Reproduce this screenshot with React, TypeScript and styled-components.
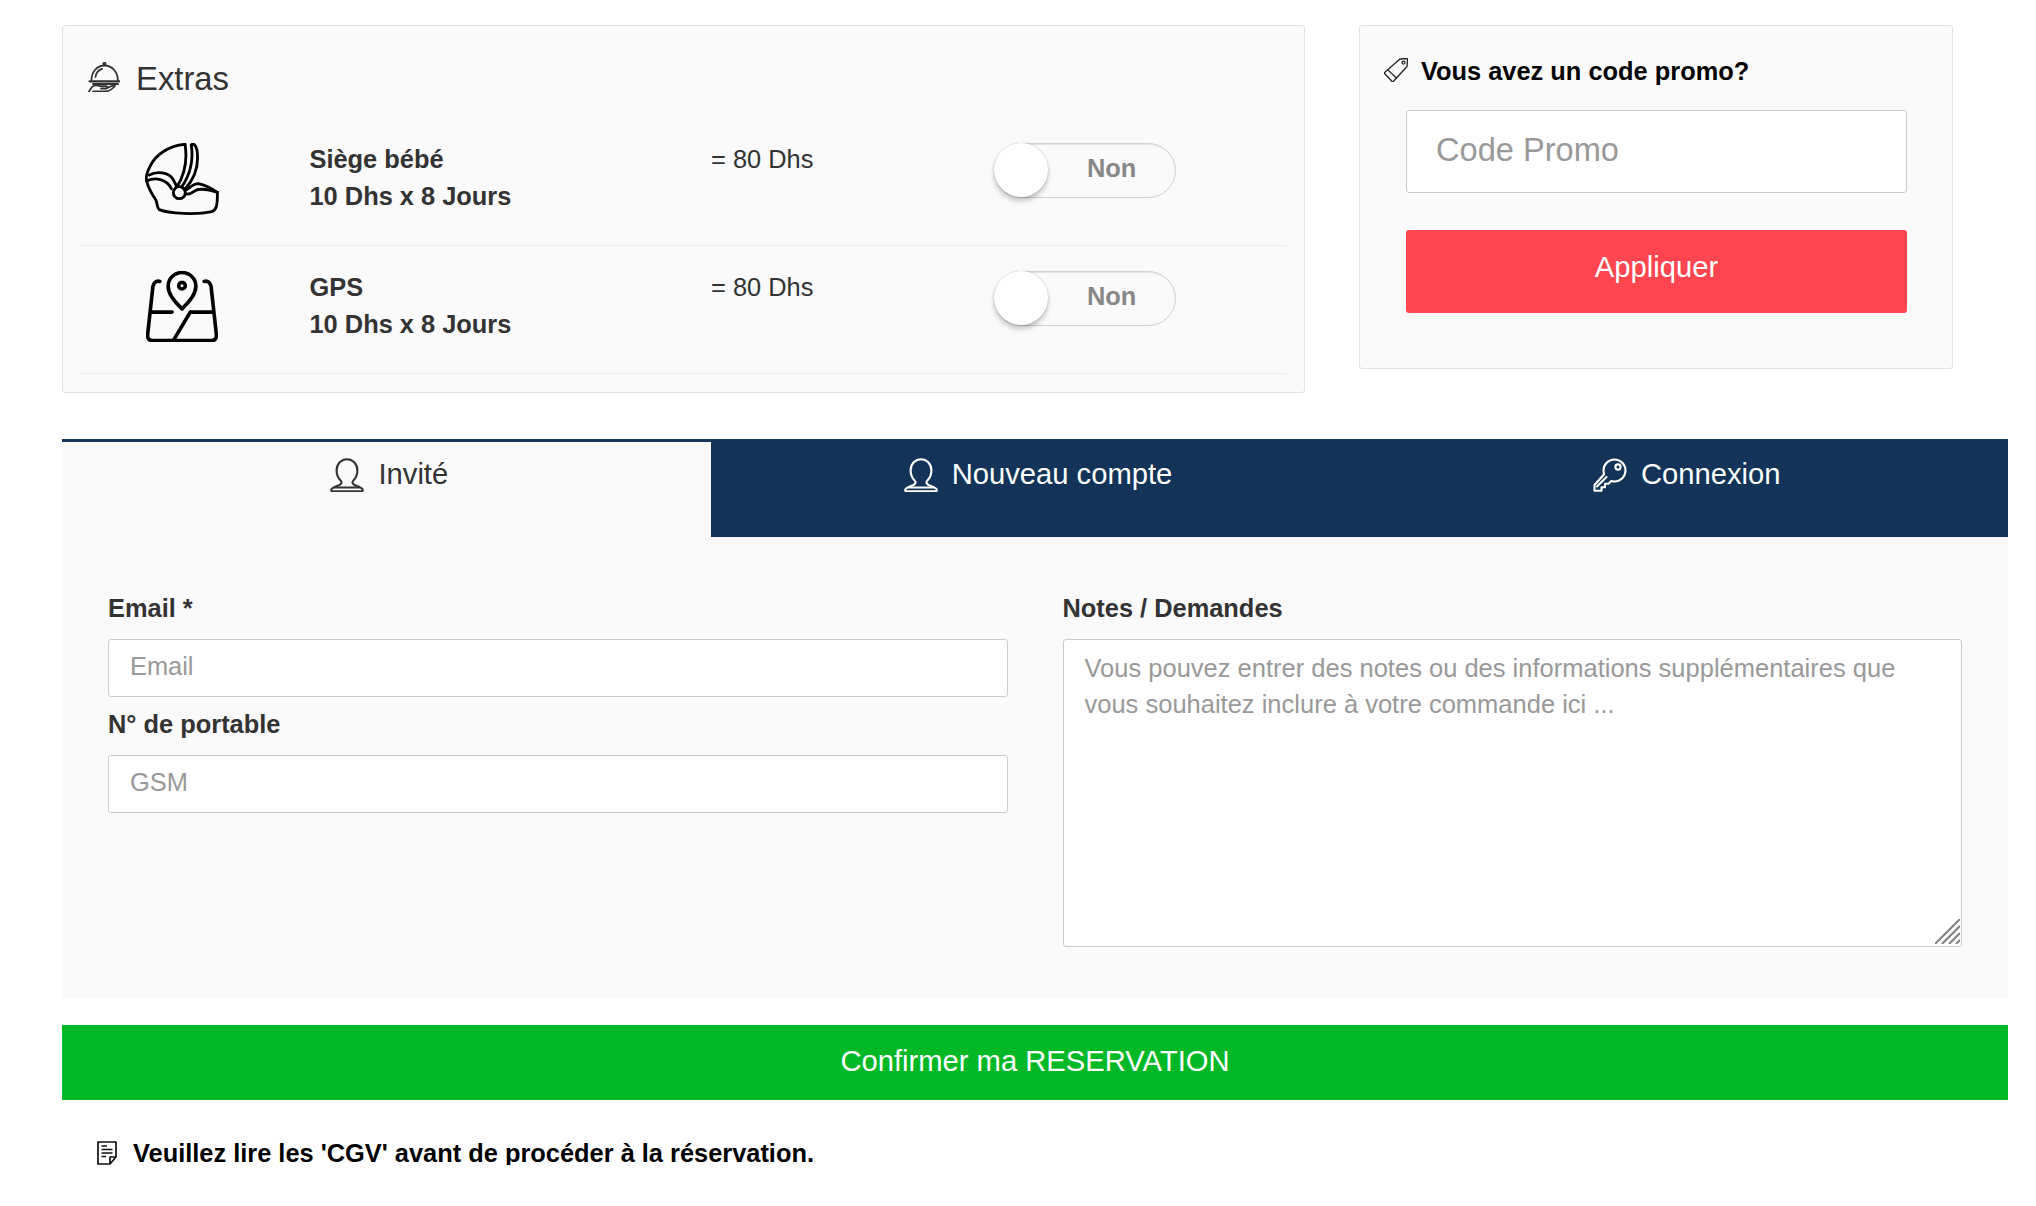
import React from "react";
import styled, { createGlobalStyle } from "styled-components";

const Global = createGlobalStyle`
  html, body { margin: 0; padding: 0; background: #fff; }
  body { font-family: "Liberation Sans", Arial, sans-serif; color: #333; }
  * { box-sizing: border-box; }
`;

const Page = styled.div`
  padding: 25px 28px 0 62px;
`;
const TopRow = styled.div`
  display: flex;
  align-items: flex-start;
  gap: 54px;
`;
const Card = styled.section`
  background: #fafafa;
  border: 1px solid #e2e2e2;
  border-radius: 3px;
`;
const ExtrasCard = styled(Card)`
  width: 1243px;
  padding: 0 18px 18px 17px;
`;
const ExtrasHeader = styled.h2`
  margin: 0;
  height: 92px;
  padding: 36px 0 0 8px;
  display: flex;
  align-items: flex-start;
  gap: 16px;
  font-size: 32.8px;
  font-weight: 400;
  line-height: 33px;
  color: #333;
`;
const ExtraRow = styled.div`
  height: 128px;
  padding-top: 22px;
  border-bottom: 1px solid #eee;
  display: grid;
  grid-template-columns: 203px 428px 283px 1fr;
  align-items: start;
`;
const ExtraIcon = styled.div`
  padding-top: 3px;
  display: flex;
  justify-content: center;
  color: #000;
`;
const ExtraName = styled.div`
  padding: 1px 0 0 26.5px;
  font-size: 25.4px;
  font-weight: 700;
  line-height: 37px;
  color: #333;
`;
const ExtraPrice = styled.div`
  padding-top: 1px;
  font-size: 25.4px;
  line-height: 37px;
  color: #333;
`;
const Toggle = styled.div`
  position: relative;
  margin-top: 3px;
  width: 182px;
  height: 55px;
  border: 1px solid #d2d2d2;
  border-radius: 28px;
  box-shadow: inset 0 2px 1px -1px rgba(0, 0, 0, 0.1);
  padding-left: 92px;
  font-size: 25.4px;
  font-weight: 700;
  line-height: 49px;
  color: #888;
`;
const Knob = styled.span`
  position: absolute;
  left: -1px;
  top: -1px;
  width: 54px;
  height: 54px;
  border-radius: 50%;
  background: #fff;
  box-shadow: 0 4px 5px rgba(0, 0, 0, 0.22), 0 0 2px rgba(0, 0, 0, 0.18);
`;
const PromoCard = styled(Card)`
  width: 594px;
  padding: 32px 45px 55px 24px;
`;
const PromoTitle = styled.h3`
  margin: 0 0 28px;
  height: 24px;
  display: flex;
  align-items: flex-start;
  gap: 13px;
  font-size: 25.4px;
  font-weight: 700;
  line-height: 26px;
  color: #000;
`;
const PromoBody = styled.div`
  padding-left: 22px;
  display: flex;
  flex-direction: column;
  gap: 37px;
`;
const Field = styled.input`
  display: block;
  width: 100%;
  height: 58px;
  padding: 0 21px 3px;
  background: #fff;
  border: 1px solid #ccc;
  border-radius: 3px;
  font: 400 25.4px "Liberation Sans", Arial, sans-serif;
  color: #333;
  outline: none;
  &::placeholder { color: #999; opacity: 1; }
`;
const PromoField = styled(Field)`
  height: 83px;
  padding: 0 29px 4px;
  font-size: 32.6px;
`;
const ApplyButton = styled.button`
  height: 83px;
  padding: 0 0 8px;
  border: 0;
  border-radius: 3px;
  background: #ff4650;
  color: #fff;
  font: 400 29.2px "Liberation Sans", Arial, sans-serif;
`;
const Tabs = styled.nav`
  margin-top: 46px;
  display: flex;
  height: 98px;
  background: #133358;
`;
const Tab = styled.div<{ $active?: boolean }>`
  flex: 1;
  padding: 16px 0 0 6px;
  border-top: 3px solid #133358;
  background: ${(p) => (p.$active ? "#fafafa" : "transparent")};
  color: ${(p) => (p.$active ? "#333" : "#fff")};
  display: flex;
  justify-content: center;
  align-items: flex-start;
  gap: 14px;
  font-size: 29.2px;
  line-height: 33px;
`;
const Panel = styled.div`
  height: 461px;
  padding: 53px 46px 0 46px;
  background: #fafafa;
  display: grid;
  grid-template-columns: 1fr 1fr;
  column-gap: 55px;
  align-items: start;
`;
const Column = styled.div`
  display: flex;
  flex-direction: column;
`;
const Label = styled.label`
  display: block;
  margin-bottom: 12px;
  font-size: 25.4px;
  font-weight: 700;
  line-height: 37px;
  color: #333;
`;
const FieldGroup = styled.div`
  & + & { margin-top: 9px; }
`;
const NotesBox = styled.div`
  position: relative;
  height: 308px;
`;
const Notes = styled.textarea`
  display: block;
  width: 100%;
  height: 100%;
  padding: 10px 21px;
  resize: none;
  background: #fff;
  border: 1px solid #ccc;
  border-radius: 3px;
  font: 400 25.5px/36.4px "Liberation Sans", Arial, sans-serif;
  outline: none;
  &::placeholder { color: #999; opacity: 1; }
`;
const Grip = styled.svg`
  position: absolute;
  right: 2px;
  bottom: 3px;
`;
const ConfirmButton = styled.button`
  display: block;
  width: 100%;
  height: 75px;
  margin-top: 27px;
  padding: 0 0 2px;
  border: 0;
  background: #02b826;
  color: #fff;
  font: 400 29.2px "Liberation Sans", Arial, sans-serif;
`;
const Notice = styled.p`
  margin: 41px 0 0;
  padding-left: 35px;
  display: flex;
  align-items: center;
  gap: 16px;
  font-size: 25.4px;
  font-weight: 700;
  line-height: 24px;
  color: #000;
`;

const BellIcon = () => (
  <svg width="32" height="30" viewBox="0 0 32 30" fill="none" stroke="#333" strokeWidth="1.8" strokeLinecap="round" strokeLinejoin="round">
    <circle cx="16.5" cy="1.8" r="1.1" />
    <path d="M3.5 18C3.5 10 9 3.5 16.5 3.5S29.8 10 29.8 18" />
    <path d="M7.5 15C8 11 10.5 8 14 6.8" />
    <path d="M1.5 19.3H31.5" strokeWidth="2.2" />
    <path d="M5 22H30" />
    <path d="M1 29.5L4 25C6 22.8 9 23 12 24.2H18C19.8 24.2 19.8 26.5 18 26.5H13" />
    <path d="M19 25.8L26.5 23M5 29.5H17C21 29.5 24 27.5 27 24" />
  </svg>
);
const SeatIcon = () => (
  <svg width="74" height="72" viewBox="45 38 222 216" fill="none" stroke="currentColor" strokeWidth="8.5" strokeLinecap="round" strokeLinejoin="round">
    <path d="M165 42C120 45 78 70 60 108C51 125 47 140 50 150" />
    <path d="M165 42C172 85 168 125 142 168" />
    <path d="M184 44C190 85 186 125 155 170" />
    <path d="M184 44C190 38 198 44 201 60C207 100 198 140 165 176" />
    <path d="M58 134C80 122 115 125 128 145C133 153 137 160 140 170" />
    <path d="M50 152C75 140 110 145 124 175" />
    <circle cx="148" cy="187" r="18" />
    <path d="M50 152C55 175 68 195 78 210C82 220 80 230 88 238C115 250 200 254 245 244C258 240 263 228 262 186" />
    <path d="M262 186C245 175 225 163 205 160C190 160 182 170 170 178" />
    <path d="M262 186C240 180 215 172 197 180C188 186 180 195 166 190" />
  </svg>
);
const MapIcon = () => (
  <svg width="72" height="71" viewBox="46 34 218 214" fill="none" stroke="currentColor" strokeWidth="11" strokeLinecap="round" strokeLinejoin="round">
    <path d="M155 148C130 125 113 102 113 80A42 42 0 0 1 197 80C197 102 180 125 155 148Z" />
    <circle cx="155" cy="78" r="10" />
    <path d="M88 65C75 62 69 70 67 80L51 225C50 238 55 244 66 244H244C255 244 260 238 259 225L243 80C241 70 235 62 222 65" />
    <path d="M60 158H125M180 158H250M180 158L130 242" />
  </svg>
);
const TagIcon = () => (
  <svg width="24" height="24" viewBox="0 0 24 24" fill="none" stroke="#222" strokeWidth="1.3" strokeLinejoin="round">
    <path d="M16 1L22.5 0.5C23.2 0.5 23.6 1 23.6 1.6L23 8.5L9.5 23.2C9 23.7 8.4 23.7 7.9 23.3L0.8 15.7C0.4 15.2 0.4 14.6 0.9 14.2Z" />
    <circle cx="19.5" cy="4.6" r="1.5" />
    <path d="M3.6 11.6L12.4 20" />
  </svg>
);
const UserIcon = () => (
  <svg width="34" height="34" viewBox="0 0 34 34" fill="none" stroke="currentColor" strokeWidth="2.1" strokeLinecap="round" strokeLinejoin="round">
    <path d="M17 1.2C11.5 1.2 6.6 5.6 6.6 12.5C6.6 17 9 21 11 23C12 24.5 11.6 26 9 27.2C5 28.8 1.2 29.8 1.2 32C1.2 33 2 33.4 3 33.4H31C32 33.4 32.8 33 32.8 32C32.8 29.8 29 28.8 25 27.2C22.4 26 22 24.5 23 23C25 21 27.4 17 27.4 12.5C27.4 5.6 22.5 1.2 17 1.2Z" />
    <path d="M5 29.5H29" />
  </svg>
);
const KeyIcon = () => (
  <svg width="34" height="34" viewBox="0 0 34 34" fill="none" stroke="currentColor" strokeWidth="2.1" strokeLinecap="round" strokeLinejoin="round">
    <path d="M21.5 1.5A11 11 0 0 1 32.5 12.5A11 11 0 0 1 21.5 23.5C20.3 23.5 19.2 23.3 18.2 23L15.5 25.7H12V29.2H8.5V32.7H1.5V27L11.1 16.2C10.7 15 10.5 13.8 10.5 12.5A11 11 0 0 1 21.5 1.5Z" />
    <circle cx="25" cy="9" r="2.6" />
    <path d="M4 28.5L13.5 19" />
  </svg>
);
const DocIcon = () => (
  <svg width="20" height="24" viewBox="0 0 20 24" fill="none" stroke="#111" strokeWidth="1.7" strokeLinejoin="round">
    <path d="M1 1H19V16L13 23H1Z" />
    <path d="M19 16H13V23" />
    <path d="M4.5 5H10M4.5 8.5H15.5M4.5 12H15.5M4.5 15.5H9" strokeWidth="1.5" />
  </svg>
);

const extras = [
  { name: "Siège bébé", icon: <SeatIcon /> },
  { name: "GPS", icon: <MapIcon /> },
];

export default function App() {
  return (
    <Page>
      <Global />
      <TopRow>
        <ExtrasCard>
          <ExtrasHeader>
            <BellIcon />
            Extras
          </ExtrasHeader>
          {extras.map((e) => (
            <ExtraRow key={e.name}>
              <ExtraIcon>{e.icon}</ExtraIcon>
              <ExtraName>
                {e.name}
                <br />
                10 Dhs x 8 Jours
              </ExtraName>
              <ExtraPrice>= 80 Dhs</ExtraPrice>
              <Toggle>
                <Knob />
                Non
              </Toggle>
            </ExtraRow>
          ))}
        </ExtrasCard>
        <PromoCard>
          <PromoTitle>
            <TagIcon />
            Vous avez un code promo?
          </PromoTitle>
          <PromoBody>
            <PromoField placeholder="Code Promo" />
            <ApplyButton>Appliquer</ApplyButton>
          </PromoBody>
        </PromoCard>
      </TopRow>
      <Tabs>
        <Tab $active>
          <UserIcon />
          Invité
        </Tab>
        <Tab>
          <UserIcon />
          Nouveau compte
        </Tab>
        <Tab>
          <KeyIcon />
          Connexion
        </Tab>
      </Tabs>
      <Panel>
        <Column>
          <FieldGroup>
            <Label>Email *</Label>
            <Field placeholder="Email" />
          </FieldGroup>
          <FieldGroup>
            <Label>N° de portable</Label>
            <Field placeholder="GSM" />
          </FieldGroup>
        </Column>
        <Column>
          <Label>Notes / Demandes</Label>
          <NotesBox>
            <Notes placeholder="Vous pouvez entrer des notes ou des informations supplémentaires que vous souhaitez inclure à votre commande ici ..." />
            <Grip width="25" height="25" viewBox="0 0 25 25" stroke="#808080" strokeWidth="2">
              <path d="M0 25L25 0M7 25L25 7M14 25L25 14M21 25L25 21" />
            </Grip>
          </NotesBox>
        </Column>
      </Panel>
      <ConfirmButton>Confirmer ma RESERVATION</ConfirmButton>
      <Notice>
        <DocIcon />
        Veuillez lire les 'CGV' avant de procéder à la réservation.
      </Notice>
    </Page>
  );
}
